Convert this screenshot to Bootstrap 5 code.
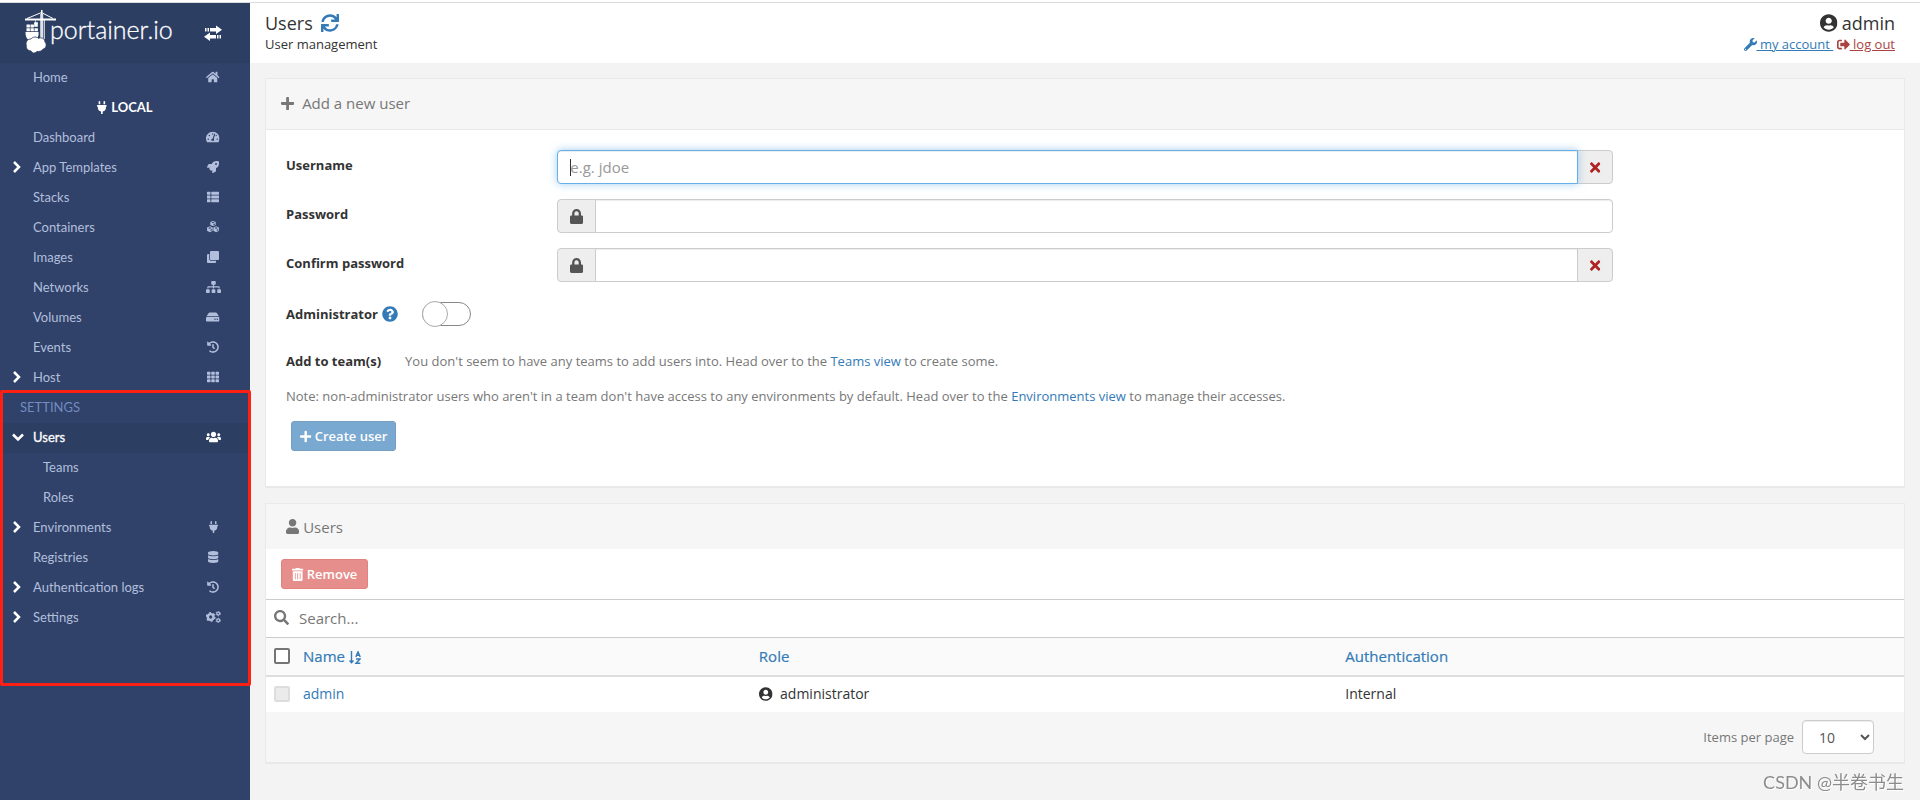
<!DOCTYPE html>
<html lang="en">
<head>
<meta charset="utf-8">
<meta name="viewport" content="width=device-width, initial-scale=1">
<title>Portainer - Users</title>
<link href="https://cdn.jsdelivr.net/npm/bootstrap@5.3.0/dist/css/bootstrap.min.css" rel="stylesheet">
<style>
  :root { --side: #30426a; --side-dark: #2d3e63; --side-text: #b2bfdc; --link: #337ab7; --muted: #777; --line: #e9e9e9; }
  body { background: #f3f3f3; color: #333; font-family: "Open Sans", "Noto Sans CJK SC", sans-serif; font-size: 13px; line-height: 20px; }
  .browser-edge { height: 3px; background: #fff; border-bottom: 1px solid #dadce0; }
  .shell { min-height: calc(100vh - 3px); }
  .ico { height: 1em; width: auto; fill: currentColor; display: inline-block; vertical-align: -2px; overflow: visible; }
  a { color: var(--link); text-decoration: none; }
  .soft { color: var(--muted); }

  /* sidebar */
  .sidebar { width: 250px; background: var(--side); color: var(--side-text); font-family: Lato, sans-serif; }
  .side-head { height: 60px; background: var(--side-dark); color: #fff; padding: 0 27px 2px 25px; }
  .brand-text { font-size: 25px; font-weight: 300; line-height: 30px; margin-left: -7px; -webkit-text-stroke: 0.3px #fff; }
  .side-item { height: 30px; color: var(--side-text); padding: 0 30px 2px 33px; position: relative; }
  .side-item .slot { width: 16px; display: flex; justify-content: center; margin-right: -1px; }
  .side-item .ico { height: 12px; }
  .side-item.on { background: var(--side-dark); color: #fff; box-shadow: inset 3px 0 #fff; -webkit-text-stroke: 0.3px #fff; }
  .side-item.sub { padding-left: 43px; }
  .chev { position: absolute; left: 12px; top: 8px; color: #fff; }
  .side-item .chev svg { display: block; width: 12px; height: 12px; fill: none; stroke: #fff; stroke-width: 2.5; }
  .side-env { height: 30px; color: #fff; font-weight: 700; padding-bottom: 2px; }
  .side-title { height: 30px; color: #738bc0; padding: 0 0 2px 20px; }
  .marked { position: relative; padding-bottom: 53px; }
  .marked::after { content: ""; position: absolute; inset: -3px -1px 0 0; border: 3px solid #ff2014; border-radius: 2px; pointer-events: none; z-index: 2; }

  /* header */
  .top { height: 60px; background: #fff; padding: 0 25px 0 15px; }
  .top-title { font-size: 18px; line-height: 22px; }
  .top-sub { line-height: 20px; }
  .top a { text-decoration: underline; }
  .danger-link { color: #a94442; }

  /* widgets */
  .widget { margin: 15px 15px 0; background: #fff; border: 1px solid var(--line); border-bottom-width: 2px; }
  .widget-head { background: #f6f6f6; color: var(--muted); font-size: 15px; padding: 0 15px; height: 45px; }
  .widget-head.tall { height: 51px; border-bottom: 1px solid var(--line); padding-bottom: 2px; }
  .widget-head.inner { padding-left: 20px; }
  .form-area { padding: 20px 20px 35px; }
  .form-area > .row { --bs-gutter-x: 30px; margin-left: -15px; margin-right: -15px; margin-bottom: 15px; }
  .form-area > .row.toggle-row { margin-bottom: 25px; }
  .ttl { font-weight: 700; line-height: 20px; padding-top: 5px; }
  .form-control, .input-group-text { height: 34px; font-size: 15px; border-color: #ccc; border-radius: 4px; padding: 6px 12px; color: #555; }
  .input-group-text { background: #eee; color: #555; }
  .input-group-text.bad { color: #ae2323; padding: 6px 0; width: 36px; justify-content: center; }
  .form-control { box-shadow: inset 0 1px 1px rgba(0,0,0,.075); }
  .form-control::placeholder { color: #999; }
  .form-control.active-box { border-color: #66afe9; box-shadow: inset 0 1px 1px rgba(0,0,0,.075), 0 0 8px rgba(102,175,233,.6); z-index: 3; }
  .caret-line::before { content: ""; position: absolute; left: 13px; top: 9px; width: 1px; height: 17px; background: #333; z-index: 6; }
  .toggle { appearance: none; width: 49px; height: 24px; border: 1px solid #888; border-radius: 12px; background: #fff; margin: 1px 0 0 24px; position: relative; }
  .toggle::before { content: ""; position: absolute; left: -1px; top: -2px; width: 26px; height: 26px; border: 1px solid #aaa; border-radius: 50%; background: #fff; }
  .act { font-size: 13px; font-weight: 600; line-height: 18px; padding: 5px 10px; border-radius: 3px; height: 30px; color: #fff; }
  .act:disabled { opacity: .65; color: #fff; }
  .act-blue { margin-left: 5px; padding: 5px 8px; }
  .act-blue:disabled { background: #337ab7; border-color: #2e6da4; }
  .act-red:disabled { background: #d9534f; border-color: #d43f3a; }

  /* users table */
  .actions { height: 50px; padding: 0 15px; }
  .search { height: 39px; border-top: 1px solid #ccc; border-bottom: 1px solid #ccc; padding: 0 8px 2px; color: var(--muted); }
  .search input { border: 0; outline: 0; padding: 0 10px; font-size: 15px; color: #555; background: none; }
  .search input::placeholder { color: var(--muted); }
  .grid-table { table-layout: fixed; font-size: 14px; line-height: 20px; margin: 0; width: 100%; }
  .grid-table th { background: #fafafa; font-weight: 400; font-size: 15px; height: 38px; border-bottom: 2px solid #ddd; padding: 0 8px 2px; -webkit-text-stroke: 0.2px var(--link); }
  .grid-table td { height: 36px; padding: 0 8px 2px; }
  .tick { appearance: none; width: 16px; height: 16px; border: 2px solid #757575; border-radius: 2px; background: #fff; margin: 0 13px 0 0; }
  .tick:disabled { border-color: #ddd; background: #ebebeb; }
  .foot { background: #f6f6f6; height: 50px; padding: 0 30px; color: var(--muted); }
  .pager { width: 72px; height: 34px; border: 1px solid #ccc; border-radius: 4px; font-size: 14px; color: #555; padding: 0 0 0 12px; background: #fff; box-shadow: inset 0 1px 1px rgba(0,0,0,.075); }
  .watermark { position: fixed; right: 16px; bottom: 6px; font: 18px/24px Lato, "Noto Sans CJK SC", sans-serif; color: #8c8c8c; text-shadow: 1px 1px #fff; }
</style>
</head>
<body>
<svg width="0" height="0" class="position-absolute" aria-hidden="true">
  <symbol id="i-home" viewBox="0 0 576 512"><path d="M280.37 148.26L96 300.11V464a16 16 0 0 0 16 16l112.06-.29a16 16 0 0 0 15.92-16V368a16 16 0 0 1 16-16h64a16 16 0 0 1 16 16v95.64a16 16 0 0 0 16 16.05L464 480a16 16 0 0 0 16-16V300L295.67 148.26a12.19 12.19 0 0 0-15.3 0zM571.6 251.47L488 182.56V44.05a12 12 0 0 0-12-12h-56a12 12 0 0 0-12 12v72.61L318.47 43a48 48 0 0 0-61 0L4.34 251.47a12 12 0 0 0-1.6 16.9l25.5 31A12 12 0 0 0 45.15 301l235.22-193.74a12.19 12.19 0 0 1 15.3 0L530.9 301a12 12 0 0 0 16.9-1.6l25.5-31a12 12 0 0 0-1.7-16.93z"/></symbol>
  <symbol id="i-plug" viewBox="0 0 384 512"><path d="M320 32a32 32 0 0 0-64 0v96h64zm48 128H16A16 16 0 0 0 0 176v32a16 16 0 0 0 16 16h16v32a160.07 160.07 0 0 0 128 156.8V512h64v-99.2A160.07 160.07 0 0 0 352 256v-32h16a16 16 0 0 0 16-16v-32a16 16 0 0 0-16-16zM128 32a32 32 0 0 0-64 0v96h64z"/></symbol>
  <symbol id="i-dash" viewBox="0 0 576 512"><path d="M288 32C128.94 32 0 160.94 0 320c0 52.8 14.25 102.26 39.06 144.8 5.61 9.62 16.3 15.2 27.44 15.2h443c11.14 0 21.83-5.58 27.44-15.2C561.75 422.26 576 372.8 576 320c0-159.06-128.94-288-288-288zm0 64c14.71 0 26.58 10.13 30.32 23.65-1.11 2.26-2.64 4.23-3.45 6.67l-9.22 27.67c-5.13 3.49-10.97 6.01-17.64 6.01-17.67 0-32-14.33-32-32S270.33 96 288 96zM96 384c-17.67 0-32-14.33-32-32s14.33-32 32-32 32 14.33 32 32-14.33 32-32 32zm48-160c-17.67 0-32-14.33-32-32s14.33-32 32-32 32 14.33 32 32-14.33 32-32 32zm246.77-72.41l-61.33 184C343.13 347.33 352 364.54 352 384c0 11.72-3.38 22.55-8.88 32H232.88c-5.5-9.45-8.88-20.28-8.88-32 0-33.94 26.5-61.43 59.9-63.59l61.34-184.01c4.17-12.56 17.73-19.45 30.36-15.17 12.57 4.19 19.35 17.79 15.17 30.36zm14.66 57.2l15.52-46.55c3.47-1.29 7.13-2.23 11.05-2.23 17.67 0 32 14.33 32 32s-14.33 32-32 32c-11.38-.01-20.89-6.28-26.57-15.22zM480 384c-17.67 0-32-14.33-32-32s14.33-32 32-32 32 14.33 32 32-14.33 32-32 32z"/></symbol>
  <symbol id="i-rocket" viewBox="0 0 512 512"><path d="M505.12 19.09c-1.19-5.53-6.66-11-12.21-12.18C460.65 0 435.46 0 410.36 0c-103.2 0-165.1 55.19-211.29 128H94.83c-16.33 0-35.56 11.89-42.87 26.49L2.58 253.29C.97 256.37 0 260.54 0 264c0 13.25 10.75 24 24 24h103.77l-22.47 22.46c-11.4 11.4-13 32.26 0 45.26l50.91 50.91c11.2 11.19 32.16 13.11 45.28 0L224 384.16V488c0 13.25 10.75 24 24 24 3.47-.01 7.63-.98 10.73-2.53l98.73-49.39c14.58-7.3 26.54-26.52 26.54-42.86V312.79c72.59-46.3 128-108.41 128-211.09.1-25.2.1-50.41-6.88-82.61zM384 168a40 40 0 1 1 0-80 40 40 0 0 1 0 80z"/></symbol>
  <symbol id="i-list" viewBox="0 0 512 512"><path d="M24 32h101a24 24 0 0 1 24 24v80a24 24 0 0 1-24 24H24a24 24 0 0 1-24-24V56a24 24 0 0 1 24-24zm181 0h283a24 24 0 0 1 24 24v80a24 24 0 0 1-24 24H205a24 24 0 0 1-24-24V56a24 24 0 0 1 24-24zM24 192h101a24 24 0 0 1 24 24v80a24 24 0 0 1-24 24H24a24 24 0 0 1-24-24v-80a24 24 0 0 1 24-24zm181 0h283a24 24 0 0 1 24 24v80a24 24 0 0 1-24 24H205a24 24 0 0 1-24-24v-80a24 24 0 0 1 24-24zM24 352h101a24 24 0 0 1 24 24v80a24 24 0 0 1-24 24H24a24 24 0 0 1-24-24v-80a24 24 0 0 1 24-24zm181 0h283a24 24 0 0 1 24 24v80a24 24 0 0 1-24 24H205a24 24 0 0 1-24-24v-80a24 24 0 0 1 24-24z"/></symbol>
  <symbol id="i-cubes" viewBox="0 0 512 512"><path d="M256 0l116 44v124l-116 48-116-48V44zm0 40l-72 28 72 28 72-28zm24 136l64-28v-46l-64 26zM122 226l120 48v142l-120 64L2 416V274zm0 40l-76 30 76 32 76-32zm26 158l64-32v-52l-64 28zM390 226l120 48v142l-120 64-120-64V274zm0 40l-76 30 76 32 76-32zm26 158l64-32v-52l-64 28z" fill-rule="evenodd"/></symbol>
  <symbol id="i-clone" viewBox="0 0 512 512"><path d="M464 0c26.51 0 48 21.49 48 48v288c0 26.51-21.49 48-48 48H176c-26.51 0-48-21.49-48-48V48c0-26.51 21.49-48 48-48h288M176 416c-44.112 0-80-35.888-80-80V128H48c-26.51 0-48 21.49-48 48v288c0 26.51 21.49 48 48 48h288c26.51 0 48-21.49 48-48v-48H176z"/></symbol>
  <symbol id="i-sitemap" viewBox="0 0 640 512"><path d="M128 352H32c-17.67 0-32 14.33-32 32v96c0 17.67 14.33 32 32 32h96c17.67 0 32-14.33 32-32v-96c0-17.67-14.33-32-32-32zm-24-80h192v48h48v-48h192v48h48v-57.59c0-21.17-17.23-38.41-38.41-38.41H344v-64h40c17.67 0 32-14.33 32-32V32c0-17.67-14.33-32-32-32H256c-17.67 0-32 14.33-32 32v96c0 17.67 14.33 32 32 32h40v64H94.41C73.23 224 56 241.23 56 262.41V320h48v-48zm264 80h-96c-17.67 0-32 14.33-32 32v96c0 17.67 14.33 32 32 32h96c17.67 0 32-14.33 32-32v-96c0-17.67-14.33-32-32-32zm240 0h-96c-17.67 0-32 14.33-32 32v96c0 17.67 14.33 32 32 32h96c17.67 0 32-14.33 32-32v-96c0-17.67-14.33-32-32-32z"/></symbol>
  <symbol id="i-hdd" viewBox="0 0 576 512"><path d="M576 304v96c0 26.51-21.49 48-48 48H48c-26.51 0-48-21.49-48-48v-96c0-26.51 21.49-48 48-48h480c26.51 0 48 21.49 48 48zm-48-80a79.557 79.557 0 0 1 30.777 6.165L462.25 85.374A48.003 48.003 0 0 0 422.311 64H153.689a48 48 0 0 0-39.938 21.374L17.223 230.165A79.557 79.557 0 0 1 48 224h480zm-48 96c-17.673 0-32 14.327-32 32s14.327 32 32 32 32-14.327 32-32-14.327-32-32-32zm-96 0c-17.673 0-32 14.327-32 32s14.327 32 32 32 32-14.327 32-32-14.327-32-32-32z"/></symbol>
  <symbol id="i-history" viewBox="0 0 512 512"><path d="M504 255.531c.253 136.64-111.18 248.372-247.82 248.468-59.015.042-113.223-20.53-155.822-54.911-11.077-8.94-11.905-25.541-1.839-35.607l11.267-11.267c8.609-8.609 22.353-9.551 31.891-1.984C173.062 425.135 212.781 440 256 440c101.705 0 184-82.311 184-184 0-101.705-82.311-184-184-184-48.814 0-93.149 18.969-126.068 49.932l50.754 50.754c10.08 10.08 2.941 27.314-11.313 27.314H24c-8.837 0-16-7.163-16-16V38.627c0-14.254 17.234-21.393 27.314-11.314l49.372 49.372C129.209 34.136 189.552 8 256 8c136.81 0 247.747 110.78 248 247.531zm-180.912 78.784l9.823-12.63c8.138-10.463 6.253-25.542-4.21-33.679L288 256.349V152c0-13.255-10.745-24-24-24h-16c-13.255 0-24 10.745-24 24v135.651l65.409 50.874c10.463 8.137 25.541 6.253 33.679-4.21z"/></symbol>
  <symbol id="i-th" viewBox="0 0 512 512"><path d="M20 32h109a20 20 0 0 1 20 20v88a20 20 0 0 1-20 20H20a20 20 0 0 1-20-20V52a20 20 0 0 1 20-20zm181 0h110a20 20 0 0 1 20 20v88a20 20 0 0 1-20 20H201a20 20 0 0 1-20-20V52a20 20 0 0 1 20-20zm182 0h109a20 20 0 0 1 20 20v88a20 20 0 0 1-20 20H383a20 20 0 0 1-20-20V52a20 20 0 0 1 20-20zM20 192h109a20 20 0 0 1 20 20v88a20 20 0 0 1-20 20H20a20 20 0 0 1-20-20v-88a20 20 0 0 1 20-20zm181 0h110a20 20 0 0 1 20 20v88a20 20 0 0 1-20 20H201a20 20 0 0 1-20-20v-88a20 20 0 0 1 20-20zm182 0h109a20 20 0 0 1 20 20v88a20 20 0 0 1-20 20H383a20 20 0 0 1-20-20v-88a20 20 0 0 1 20-20zM20 352h109a20 20 0 0 1 20 20v88a20 20 0 0 1-20 20H20a20 20 0 0 1-20-20v-88a20 20 0 0 1 20-20zm181 0h110a20 20 0 0 1 20 20v88a20 20 0 0 1-20 20H201a20 20 0 0 1-20-20v-88a20 20 0 0 1 20-20zm182 0h109a20 20 0 0 1 20 20v88a20 20 0 0 1-20 20H383a20 20 0 0 1-20-20v-88a20 20 0 0 1 20-20z"/></symbol>
  <symbol id="i-users" viewBox="0 0 640 512"><path d="M96 224c35.3 0 64-28.7 64-64s-28.7-64-64-64-64 28.7-64 64 28.7 64 64 64zm448 0c35.3 0 64-28.7 64-64s-28.7-64-64-64-64 28.7-64 64 28.7 64 64 64zm32 32h-64c-17.6 0-33.5 7.1-45.1 18.6 40.3 22.1 68.9 62 75.1 109.4h66c17.7 0 32-14.3 32-32v-32c0-35.3-28.7-64-64-64zm-256 0c61.9 0 112-50.1 112-112S381.9 32 320 32 208 82.1 208 144s50.1 112 112 112zm76.8 32h-8.3c-20.8 10-43.9 16-68.5 16s-47.6-6-68.5-16h-8.3C179.6 288 128 339.6 128 403.2V432c0 26.5 21.5 48 48 48h288c26.5 0 48-21.5 48-48v-28.8c0-63.6-51.6-115.2-115.2-115.2zm-223.7-13.4C161.5 263.1 145.6 256 128 256H64c-35.3 0-64 28.7-64 64v32c0 17.7 14.3 32 32 32h65.9c6.3-47.4 34.9-87.3 75.2-109.4z"/></symbol>
  <symbol id="i-db" viewBox="0 0 448 512"><path d="M448 73.143v45.714C448 159.143 347.667 192 224 192S0 159.143 0 118.857V73.143C0 32.857 100.333 0 224 0s224 32.857 224 73.143zM448 176v102.857C448 319.143 347.667 352 224 352S0 319.143 0 278.857V176c48.125 33.143 136.208 48.572 224 48.572S399.874 209.143 448 176zm0 160v102.857C448 479.143 347.667 512 224 512S0 479.143 0 438.857V336c48.125 33.143 136.208 48.572 224 48.572S399.874 369.143 448 336z"/></symbol>
  <symbol id="i-cogs" viewBox="0 0 640 512"><g fill="none" stroke="currentColor"><circle cx="200" cy="256" r="120" stroke-width="100"/><circle cx="200" cy="256" r="184" stroke-width="50" stroke-dasharray="90 102.700"/><circle cx="520" cy="110" r="62" stroke-width="54"/><circle cx="520" cy="110" r="96" stroke-width="34" stroke-dasharray="50 50.500"/><circle cx="520" cy="402" r="62" stroke-width="54"/><circle cx="520" cy="402" r="96" stroke-width="34" stroke-dasharray="50 50.500"/></g></symbol>
  <symbol id="i-user" viewBox="0 0 448 512"><path d="M224 256c70.7 0 128-57.3 128-128S294.7 0 224 0 96 57.3 96 128s57.3 128 128 128zm89.6 32h-16.7c-22.2 10.2-46.9 16-72.9 16s-50.6-5.8-72.9-16h-16.7C60.2 288 0 348.2 0 422.4V464c0 26.5 21.5 48 48 48h352c26.5 0 48-21.5 48-48v-41.6c0-74.2-60.2-134.4-134.4-134.4z"/></symbol>
  <symbol id="i-ucircle" viewBox="0 0 496 512"><path d="M248 8C111 8 0 119 0 256s111 248 248 248 248-111 248-248S385 8 248 8zm0 96c48.6 0 88 39.4 88 88s-39.4 88-88 88-88-39.4-88-88 39.4-88 88-88zm0 344c-58.7 0-111.3-26.6-146.5-68.2 18.8-35.4 55.6-59.8 98.5-59.8 2.4 0 4.8.4 7.1 1.1 13 4.2 26.6 6.9 40.9 6.9 14.3 0 28-2.7 40.9-6.9 2.3-.7 4.7-1.1 7.1-1.1 42.9 0 79.7 24.4 98.5 59.8C359.3 421.4 306.7 448 248 448z"/></symbol>
  <symbol id="i-wrench" viewBox="0 0 512 512"><path d="M507.73 109.1c-2.24-9.03-13.54-12.09-20.12-5.51l-74.36 74.36-67.88-11.31-11.31-67.88 74.36-74.36c6.62-6.62 3.43-17.9-5.66-20.16-47.38-11.74-99.55.91-136.58 37.93-39.64 39.64-50.55 97.1-34.05 147.2L18.74 402.76c-24.99 24.99-24.99 65.51 0 90.5 24.99 24.99 65.51 24.99 90.5 0l213.21-213.21c50.12 16.71 107.47 5.68 147.37-34.22 37.07-37.07 49.7-89.32 37.91-136.73zM64 472c-13.25 0-24-10.75-24-24 0-13.26 10.75-24 24-24s24 10.74 24 24c0 13.25-10.75 24-24 24z"/></symbol>
  <symbol id="i-out" viewBox="0 0 512 512"><path d="M497 273L329 441c-15 15-41 4.500-41-17v-96H152c-13.300 0-24-10.700-24-24v-96c0-13.300 10.700-24 24-24h136V88c0-21.400 25.900-32 41-17l168 168c9.300 9.400 9.300 24.600 0 34zM192 436v-40c0-6.600-5.400-12-12-12H96c-17.700 0-32-14.300-32-32V160c0-17.700 14.300-32 32-32h84c6.600 0 12-5.400 12-12V76c0-6.600-5.400-12-12-12H96c-53 0-96 43-96 96v192c0 53 43 96 96 96h84c6.600 0 12-5.400 12-12z"/></symbol>
  <symbol id="i-plus" viewBox="0 0 448 512"><path d="M416 208H272V64c0-17.67-14.33-32-32-32h-32c-17.67 0-32 14.33-32 32v144H32c-17.67 0-32 14.33-32 32v32c0 17.67 14.33 32 32 32h144v144c0 17.67 14.33 32 32 32h32c17.67 0 32-14.33 32-32V304h144c17.67 0 32-14.33 32-32v-32c0-17.67-14.33-32-32-32z"/></symbol>
  <symbol id="i-lock" viewBox="0 0 448 512"><path d="M400 224h-24v-72C376 68.2 307.8 0 224 0S72 68.2 72 152v72H48c-26.5 0-48 21.5-48 48v192c0 26.5 21.5 48 48 48h352c26.5 0 48-21.5 48-48V272c0-26.5-21.5-48-48-48zm-104 0H152v-72c0-39.7 32.3-72 72-72s72 32.3 72 72v72z"/></symbol>
  <symbol id="i-times" viewBox="0 0 352 512"><path d="M242.72 256l100.07-100.07c12.28-12.28 12.28-32.19 0-44.48l-22.24-22.24c-12.28-12.28-32.19-12.28-44.48 0L176 189.28 75.93 89.21c-12.28-12.28-32.19-12.28-44.48 0L9.21 111.45c-12.28 12.28-12.28 32.19 0 44.48L109.28 256 9.21 356.07c-12.28 12.28-12.28 32.19 0 44.48l22.24 22.24c12.28 12.28 32.2 12.28 44.48 0L176 322.72l100.07 100.07c12.28 12.28 32.2 12.28 44.48 0l22.24-22.24c12.28-12.28 12.28-32.19 0-44.48L242.72 256z"/></symbol>
  <symbol id="i-help" viewBox="0 0 512 512"><path d="M504 256c0 136.997-111.043 248-248 248S8 392.997 8 256C8 119.083 119.043 8 256 8s248 111.083 248 248zM262.655 90c-54.497 0-89.255 22.957-116.549 63.758-3.536 5.286-2.353 12.415 2.715 16.258l34.699 26.31c5.205 3.947 12.621 3.008 16.665-2.122 17.864-22.658 30.113-35.797 57.303-35.797 20.429 0 45.698 13.148 45.698 32.958 0 14.976-12.363 22.667-32.534 33.976C247.128 238.528 216 254.941 216 296v4c0 6.627 5.373 12 12 12h56c6.627 0 12-5.373 12-12v-1.333c0-28.462 83.186-29.647 83.186-106.667 0-58.002-60.165-102-116.531-102zM256 338c-25.365 0-46 20.635-46 46 0 25.364 20.635 46 46 46s46-20.636 46-46c0-25.365-20.635-46-46-46z"/></symbol>
  <symbol id="i-search" viewBox="0 0 512 512"><path d="M505 442.700L405.300 343c-4.500-4.500-10.600-7-17-7H372c27.600-35.300 44-79.700 44-128C416 93.100 322.900 0 208 0S0 93.100 0 208s93.100 208 208 208c48.300 0 92.700-16.400 128-44v16.300c0 6.400 2.500 12.500 7 17l99.700 99.700c9.400 9.400 24.600 9.400 33.900 0l28.300-28.300c9.400-9.400 9.400-24.600.1-34zM208 336c-70.700 0-128-57.200-128-128 0-70.700 57.200-128 128-128 70.700 0 128 57.200 128 128 0 70.700-57.200 128-128 128z"/></symbol>
  <symbol id="i-trash" viewBox="0 0 448 512"><path d="M32 464a48 48 0 0 0 48 48h288a48 48 0 0 0 48-48V128H32zm272-256a16 16 0 0 1 32 0v224a16 16 0 0 1-32 0zm-96 0a16 16 0 0 1 32 0v224a16 16 0 0 1-32 0zm-96 0a16 16 0 0 1 32 0v224a16 16 0 0 1-32 0zM432 32H312l-9.400-18.700A24 24 0 0 0 281.100 0H166.800a23.720 23.720 0 0 0-21.400 13.300L136 32H16A16 16 0 0 0 0 48v32a16 16 0 0 0 16 16h416a16 16 0 0 0 16-16V48a16 16 0 0 0-16-16z"/></symbol>
  <symbol id="i-sync" viewBox="0 0 512 512"><path d="M440.65 12.57l4 82.77A247.16 247.16 0 0 0 255.83 8C134.73 8 33.91 94.92 12.29 209.82A12 12 0 0 0 24.09 224h49.05a12 12 0 0 0 11.67-9.26 175.91 175.91 0 0 1 317-56.94l-101.46-4.86a12 12 0 0 0-12.57 12v47.41a12 12 0 0 0 12 12H500a12 12 0 0 0 12-12V12a12 12 0 0 0-12-12h-47.37a12 12 0 0 0-11.98 12.57zM255.83 432a175.61 175.61 0 0 1-146-77.8l101.8 4.87a12 12 0 0 0 12.57-12v-47.4a12 12 0 0 0-12-12H12a12 12 0 0 0-12 12V500a12 12 0 0 0 12 12h47.35a12 12 0 0 0 12-12.6l-4.15-82.57A247.17 247.17 0 0 0 255.83 504c121.11 0 221.93-86.92 243.55-201.82a12 12 0 0 0-11.8-14.18h-49.05a12 12 0 0 0-11.67 9.26A175.86 175.86 0 0 1 255.83 432z"/></symbol>
  <symbol id="i-right" viewBox="0 0 12 12"><path d="M2 1l5 5-5 5"/></symbol>
  <symbol id="i-down" viewBox="0 0 12 12"><path d="M1 3.500l5 5 5-5"/></symbol>
  <symbol id="i-sort" viewBox="0 0 12 13"><path fill="none" stroke="currentColor" stroke-width="1.400" d="M2.500 0v12M.5 9.500l2 2.300 2-2.300M6.800 6L9 .8 11.200 6M7.600 4.300h2.800M7 8h4L7 12.300h4.300"/></symbol>
</svg>

<div class="browser-edge"></div>
<div class="shell d-flex">
  <aside class="sidebar flex-shrink-0">
    <div class="side-head d-flex align-items-center justify-content-between">
      <div class="d-flex align-items-start">
        <svg width="32" height="44" viewBox="0 0 32 44" fill="#fff" aria-hidden="true">
          <path d="M16 0h1.500v4h-1.500zM0 8.500h31v2H0z"/>
          <path d="M2 8.500L16.500 2.500 28 8.500" fill="none" stroke="#fff"/>
          <path d="M15.200 4h3v25h-3z" opacity=".85"/><path d="M18.800 10h1.200v19h-1.200z" opacity=".7"/>
          <path d="M10.500 10v6M9 13.500h4M9.500 12.500h3v4h-3z" stroke="#fff" stroke-width=".6"/>
          <path d="M1.500 14.500h3.400v3H1.500zM5.500 14.500h3.400v3H5.500zM1.500 18.200h3.400v3H1.500zM5.500 18.200h3.400v3H5.500zM9.500 18.200h3.400v3H9.500zM.5 22h13c.6 3-.6 6-2.500 7.500H3C1 28 .5 25 .5 22z"/>
          <path d="M6 29c1.500-2.500 6-2.500 7.500-.6 3-1.600 6.500.4 6.300 3.300 2.400 2.400 1.500 6.800-1.800 7.400-1.600 2.600-4.500 2.600-6 2.200-2 2.600-5 1.800-6-.4C2.500 40.800.8 38 1.500 35.500c-1.500-3 1-6.800 4.500-6.500z" stroke="#2d3e63" stroke-width=".8"/>
        </svg>
        <span class="brand-text pt-1">portainer.io</span>
      </div>
      <button class="btn p-0 border-0 text-white lh-1" aria-label="Toggle sidebar">
        <svg width="20" height="16" viewBox="0 0 20 16" fill="#fff"><path d="M2 3h1.500v3.500H2zM4.500 3H6v3.500H4.500zM7 3h6V.5L19 4.700 13 9V6.500H7zM18 10h-1.500v3.500H18zM15.500 10H14v3.500h1.500zM13 10H7V7.500L1 11.700 7 16v-2.500h6z"/></svg>
      </button>
    </div>
    <nav>
      <a href="#" class="side-item d-flex align-items-center justify-content-between">Home<span class="slot"><svg class="ico" viewBox="0 0 576 512"><use href="#i-home"/></svg></span></a>
      <div class="side-env d-flex align-items-center justify-content-center gap-1"><svg class="ico" viewBox="0 0 384 512"><use href="#i-plug"/></svg> LOCAL</div>
      <a href="#" class="side-item d-flex align-items-center justify-content-between">Dashboard<span class="slot"><svg class="ico" viewBox="0 0 576 512"><use href="#i-dash"/></svg></span></a>
      <a href="#" class="side-item d-flex align-items-center justify-content-between"><span class="chev"><svg><use href="#i-right"/></svg></span>App Templates<span class="slot"><svg class="ico" viewBox="0 0 512 512"><use href="#i-rocket"/></svg></span></a>
      <a href="#" class="side-item d-flex align-items-center justify-content-between">Stacks<span class="slot"><svg class="ico" viewBox="0 0 512 512"><use href="#i-list"/></svg></span></a>
      <a href="#" class="side-item d-flex align-items-center justify-content-between">Containers<span class="slot"><svg class="ico" viewBox="0 0 512 512"><use href="#i-cubes"/></svg></span></a>
      <a href="#" class="side-item d-flex align-items-center justify-content-between">Images<span class="slot"><svg class="ico" viewBox="0 0 512 512"><use href="#i-clone"/></svg></span></a>
      <a href="#" class="side-item d-flex align-items-center justify-content-between">Networks<span class="slot"><svg class="ico" viewBox="0 0 640 512"><use href="#i-sitemap"/></svg></span></a>
      <a href="#" class="side-item d-flex align-items-center justify-content-between">Volumes<span class="slot"><svg class="ico" viewBox="0 0 576 512"><use href="#i-hdd"/></svg></span></a>
      <a href="#" class="side-item d-flex align-items-center justify-content-between">Events<span class="slot"><svg class="ico" viewBox="0 0 512 512"><use href="#i-history"/></svg></span></a>
      <a href="#" class="side-item d-flex align-items-center justify-content-between"><span class="chev"><svg><use href="#i-right"/></svg></span>Host<span class="slot"><svg class="ico" viewBox="0 0 512 512"><use href="#i-th"/></svg></span></a>
      <div class="marked">
        <div class="side-title d-flex align-items-center">SETTINGS</div>
        <a href="#" class="side-item on d-flex align-items-center justify-content-between"><span class="chev"><svg><use href="#i-down"/></svg></span>Users<span class="slot"><svg class="ico" viewBox="0 0 640 512"><use href="#i-users"/></svg></span></a>
        <a href="#" class="side-item sub d-flex align-items-center">Teams</a>
        <a href="#" class="side-item sub d-flex align-items-center">Roles</a>
        <a href="#" class="side-item d-flex align-items-center justify-content-between"><span class="chev"><svg><use href="#i-right"/></svg></span>Environments<span class="slot"><svg class="ico" viewBox="0 0 384 512"><use href="#i-plug"/></svg></span></a>
        <a href="#" class="side-item d-flex align-items-center justify-content-between">Registries<span class="slot"><svg class="ico" viewBox="0 0 448 512"><use href="#i-db"/></svg></span></a>
        <a href="#" class="side-item d-flex align-items-center justify-content-between"><span class="chev"><svg><use href="#i-right"/></svg></span>Authentication logs<span class="slot"><svg class="ico" viewBox="0 0 512 512"><use href="#i-history"/></svg></span></a>
        <a href="#" class="side-item d-flex align-items-center justify-content-between"><span class="chev"><svg><use href="#i-right"/></svg></span>Settings<span class="slot"><svg class="ico" viewBox="0 0 640 512"><use href="#i-cogs"/></svg></span></a>
      </div>
    </nav>
  </aside>

  <main class="flex-grow-1">
    <header class="top d-flex justify-content-between align-items-center">
      <div>
        <div class="top-title">Users <a href="#" class="ms-1" aria-label="Refresh"><svg class="ico" viewBox="0 0 512 512"><use href="#i-sync"/></svg></a></div>
        <div class="top-sub">User management</div>
      </div>
      <div class="text-end">
        <div class="top-title"><svg class="ico" viewBox="0 0 496 512"><use href="#i-ucircle"/></svg> admin</div>
        <div class="top-sub"><a href="#"><svg class="ico" viewBox="0 0 512 512"><use href="#i-wrench"/></svg> my account&nbsp;</a> <a href="#" class="danger-link"><svg class="ico" viewBox="0 0 512 512"><use href="#i-out"/></svg> log out</a></div>
      </div>
    </header>

    <section class="widget">
      <div class="widget-head tall d-flex align-items-center gap-2"><svg class="ico" viewBox="0 0 448 512"><use href="#i-plus"/></svg> Add a new user</div>
      <form class="form-area">
        <div class="row">
          <label class="col-2 ttl" for="username">Username</label>
          <div class="col-8"><div class="input-group caret-line">
            <input id="username" type="text" class="form-control active-box" placeholder="e.g. jdoe">
            <span class="input-group-text bad"><svg class="ico" viewBox="0 0 352 512"><use href="#i-times"/></svg></span>
          </div></div>
        </div>
        <div class="row">
          <label class="col-2 ttl" for="password">Password</label>
          <div class="col-8"><div class="input-group">
            <span class="input-group-text"><svg class="ico" viewBox="0 0 448 512"><use href="#i-lock"/></svg></span>
            <input id="password" type="password" class="form-control">
          </div></div>
        </div>
        <div class="row">
          <label class="col-2 ttl" for="confirm">Confirm password</label>
          <div class="col-8"><div class="input-group">
            <span class="input-group-text"><svg class="ico" viewBox="0 0 448 512"><use href="#i-lock"/></svg></span>
            <input id="confirm" type="password" class="form-control">
            <span class="input-group-text bad"><svg class="ico" viewBox="0 0 352 512"><use href="#i-times"/></svg></span>
          </div></div>
        </div>
        <div class="row toggle-row"><div class="col-12 d-flex align-items-center pt-1">
          <label class="ttl pt-0" for="isadmin">Administrator</label>
          <a href="#" class="ms-1 fs-6 lh-1" aria-label="Help"><svg class="ico" viewBox="0 0 512 512"><use href="#i-help"/></svg></a>
          <input id="isadmin" type="checkbox" class="toggle">
        </div></div>
        <div class="row"><div class="col-12 d-flex gap-4">
          <span class="ttl pt-0">Add to team(s)</span>
          <span class="soft">You don't seem to have any teams to add users into. Head over to the <a href="#">Teams view</a> to create some.</span>
        </div></div>
        <div class="row"><div class="col-12 soft">Note: non-administrator users who aren't in a team don't have access to any environments by default. Head over to the <a href="#">Environments view</a> to manage their accesses.</div></div>
        <button type="submit" class="btn act act-blue" disabled><svg class="ico" viewBox="0 0 448 512"><use href="#i-plus"/></svg> Create user</button>
      </form>
    </section>

    <section class="widget">
      <div class="widget-head inner d-flex align-items-center gap-1"><svg class="ico" viewBox="0 0 448 512"><use href="#i-user"/></svg> Users</div>
      <div class="actions d-flex align-items-center"><button class="btn act act-red" disabled><svg class="ico" viewBox="0 0 448 512"><use href="#i-trash"/></svg> Remove</button></div>
      <div class="search d-flex align-items-center"><label for="find" class="lh-1"><svg class="ico" viewBox="0 0 512 512" role="img" aria-label="Search" style="height:15px"><use href="#i-search"/></svg></label><input id="find" type="text" class="flex-grow-1" placeholder="Search..."></div>
      <table class="grid-table">
        <colgroup><col style="width:29.6%"><col style="width:35.8%"><col style="width:34.6%"></colgroup>
        <thead><tr>
          <th><div class="d-flex align-items-center"><input type="checkbox" class="tick" aria-label="Select all"><a href="#">Name <svg class="ico" style="height:13px" viewBox="0 0 12 13"><use href="#i-sort"/></svg></a></div></th>
          <th><a href="#">Role</a></th>
          <th><a href="#">Authentication</a></th>
        </tr></thead>
        <tbody><tr>
          <td><div class="d-flex align-items-center"><input type="checkbox" class="tick" disabled aria-label="Select admin"><a href="#">admin</a></div></td>
          <td><svg class="ico me-1" viewBox="0 0 496 512"><use href="#i-ucircle"/></svg> administrator</td>
          <td>Internal</td>
        </tr></tbody>
      </table>
      <div class="foot d-flex align-items-center justify-content-end gap-2">
        <label for="per">Items per page</label>
        <select id="per" class="pager"><option>10</option><option>25</option><option>50</option></select>
      </div>
    </section>
  </main>
</div>
<div class="watermark">CSDN @半卷书生</div>
<script src="https://cdn.jsdelivr.net/npm/bootstrap@5.3.0/dist/js/bootstrap.bundle.min.js"></script>
</body>
</html>
